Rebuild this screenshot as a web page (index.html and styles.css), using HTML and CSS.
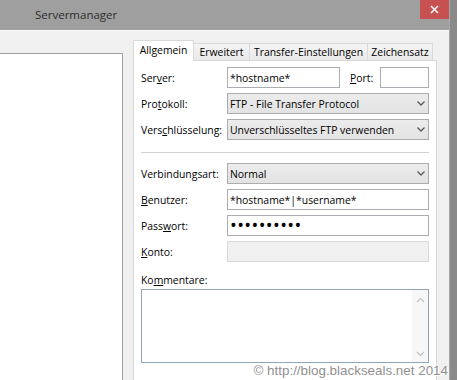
FILE: index.html
```html
<!DOCTYPE html>
<html lang="de">
<head>
<meta charset="utf-8">
<title>Servermanager</title>
<link rel="stylesheet" href="styles.css">
</head>
<body>
<div class="window">
  <div class="titlebar">
    <span class="title">Servermanager</span>
    <div class="close">
      <svg width="9" height="9" viewBox="0 0 9 9"><path d="M1 1L8 8M8 1L1 8" stroke="#fff" stroke-width="1.5" fill="none"/></svg>
    </div>
  </div>
  <div class="client">
    <div class="tree"></div>
    <div class="tabctl">
      <div class="tabs">
        <div class="tab active tab-allg">Allgemein</div>
        <div class="tab tab-erw">Erweitert</div>
        <div class="tab tab-trans">Transfer-Einstellungen</div>
        <div class="tab tab-zei">Zeichensatz</div>
      </div>
      <div class="page">
        <div class="row">
          <span class="lbl">Ser<u>v</u>er:</span>
          <div class="input server">*hostname*</div>
          <span class="lbl port-lbl"><u>P</u>ort:</span>
          <div class="input port"></div>
        </div>
        <div class="row">
          <span class="lbl">Pro<u>t</u>okoll:</span>
          <div class="select">
            <span class="sel-text">FTP - File Transfer Protocol</span>
            <svg class="chev" width="8" height="5" viewBox="0 0 8 5"><path d="M0.5 0.5L4 4L7.5 0.5" stroke="#5a5a5a" stroke-width="1.3" fill="none"/></svg>
          </div>
        </div>
        <div class="row">
          <span class="lbl">Vers<u>c</u>hlüsselung:</span>
          <div class="select">
            <span class="sel-text">Unverschlüsseltes FTP verwenden</span>
            <svg class="chev" width="8" height="5" viewBox="0 0 8 5"><path d="M0.5 0.5L4 4L7.5 0.5" stroke="#5a5a5a" stroke-width="1.3" fill="none"/></svg>
          </div>
        </div>
        <div class="sep"></div>
        <div class="row">
          <span class="lbl">Verbindun<u>g</u>sart:</span>
          <div class="select">
            <span class="sel-text">Normal</span>
            <svg class="chev" width="8" height="5" viewBox="0 0 8 5"><path d="M0.5 0.5L4 4L7.5 0.5" stroke="#5a5a5a" stroke-width="1.3" fill="none"/></svg>
          </div>
        </div>
        <div class="row">
          <span class="lbl"><u>B</u>enutzer:</span>
          <div class="input wide">*hostname*|*username*</div>
        </div>
        <div class="row">
          <span class="lbl">Pass<u>w</u>ort:</span>
          <div class="input wide"><span class="dots">••••••••••</span></div>
        </div>
        <div class="row">
          <span class="lbl"><u>K</u>onto:</span>
          <div class="input wide disabled"></div>
        </div>
        <div class="comment">
          <span class="lbl-c">Ko<u>m</u>mentare:</span>
          <div class="textarea">
            <div class="scroll">
              <svg width="9" height="6" viewBox="0 0 9 6"><path d="M1 5L4.5 1.5L8 5" stroke="#c2c2c2" stroke-width="1.2" fill="none"/></svg>
              <svg width="9" height="6" viewBox="0 0 9 6"><path d="M1 1L4.5 4.5L8 1" stroke="#c2c2c2" stroke-width="1.2" fill="none"/></svg>
            </div>
          </div>
        </div>
      </div>
    </div>
  </div>
</div>
<div class="watermark">© http://blog.blackseals.net 2014</div>
</body>
</html>
```

FILE: styles.css
```css
* { box-sizing: border-box; }
html, body { margin: 0; padding: 0; }
body {
  width: 457px;
  height: 380px;
  overflow: hidden;
  position: relative;
  background: #8a8a8a;
  font-family: "Open Sans", "Noto Sans", sans-serif;
  font-size: 10.4px;
  color: #000;
}
.window {
  width: 450px;
  height: 380px;
  background: #f0f0f0;
  border-right: 1px solid #a9a9a9;
  display: flex;
  flex-direction: column;
  overflow: hidden;
}
.titlebar {
  height: 30px;
  flex: none;
  background: #9f9f9f;
  display: flex;
  align-items: flex-start;
}
.title {
  flex: 1;
  margin: 6px 0 0 35px;
  font-size: 11.5px;
  line-height: 17px;
  color: #2e2e2e;
}
.close {
  width: 29px;
  height: 19px;
  background: #c75050;
  display: flex;
  align-items: center;
  justify-content: center;
}
.client {
  flex: 1;
  min-height: 0;
  display: flex;
  align-items: flex-start;
  border-top: 1px solid #f9f9f9;
}
.tree {
  flex: none;
  width: 124px;
  height: 400px;
  margin: 22px 0 0 -1px;
  background: #fff;
  border: 1px solid #a0a0a0;
}
.tabctl {
  flex: none;
  width: 304px;
  margin: 9px 0 0 10px;
  display: flex;
  flex-direction: column;
}
.tabs {
  display: flex;
  align-items: flex-end;
  height: 21px;
  margin-bottom: -1px;
  position: relative;
  z-index: 1;
}
.tab {
  height: 17px;
  margin-bottom: 1px;
  margin-left: -1px;
  border: 1px solid #d9d9d9;
  border-bottom: none;
  background: linear-gradient(#f4f4f4, #e9e9e9);
  display: flex;
  align-items: center;
  justify-content: center;
  line-height: 1;
  white-space: nowrap;
}
.tab.active {
  height: 21px;
  margin: 0;
  background: #fff;
  position: relative;
  z-index: 2;
  padding-bottom: 1px;
}
.tab-allg { width: 61px; }
.tab-erw { width: 57px; }
.tab-trans { width: 119px; }
.tab-zei { width: 66px; }
.page {
  height: 330px;
  background: #fff;
  border: 1px solid #d9d9d9;
  padding: 6px 7px 0 7px;
  display: flex;
  flex-direction: column;
  gap: 5px;
}
.row {
  flex: none;
  height: 21px;
  display: flex;
  align-items: center;
}
.lbl {
  flex: none;
  width: 86px;
  white-space: nowrap;
}
.port-lbl {
  width: 30px;
  margin-left: 10px;
}
.input {
  height: 21px;
  border: 1px solid #abadb3;
  background: #fff;
  padding: 0 2px;
  display: flex;
  align-items: center;
  white-space: nowrap;
  color: #000;
}
.server { width: 113px; }
.port { width: 49px; }
.wide { width: 202px; }
.disabled {
  background: #f0f0f0;
  border-color: #d9d9d9;
}
.dots {
  font-size: 18px;
  letter-spacing: 0.4px;
  line-height: 1;
  margin-left: 0;
  margin-top: -1px;
}
.select {
  width: 202px;
  height: 21px;
  border: 1px solid #acacac;
  background: linear-gradient(#ececec, #e3e3e3);
  padding: 0 3px 0 2px;
  display: flex;
  align-items: center;
  color: #000;
}
.sel-text { flex: 1; white-space: nowrap; }
.chev { flex: none; }
.sep {
  flex: none;
  height: 1px;
  background: #d2d2d2;
  margin: 7px 0 5px;
}
.comment {
  flex: none;
  margin-top: 6px;
  display: flex;
  flex-direction: column;
  gap: 2px;
}
.lbl-c { line-height: 14px; }
.textarea {
  width: 288px;
  height: 74px;
  border: 1px solid #8fa6b6;
  background: #fff;
  display: flex;
  justify-content: flex-end;
}
.scroll {
  width: 16px;
  background: #f7f7f7;
  display: flex;
  flex-direction: column;
  justify-content: space-between;
  align-items: center;
  padding: 7px 0 5px;
}
.watermark {
  position: absolute;
  right: 9px;
  bottom: 1px;
  font-family: "Liberation Sans", Arial, sans-serif;
  font-size: 13.4px;
  line-height: 16px;
  color: #909090;
  text-shadow: 0 0 2px #fff, 1px 1px 0 #fff;
  white-space: nowrap;
}
```
